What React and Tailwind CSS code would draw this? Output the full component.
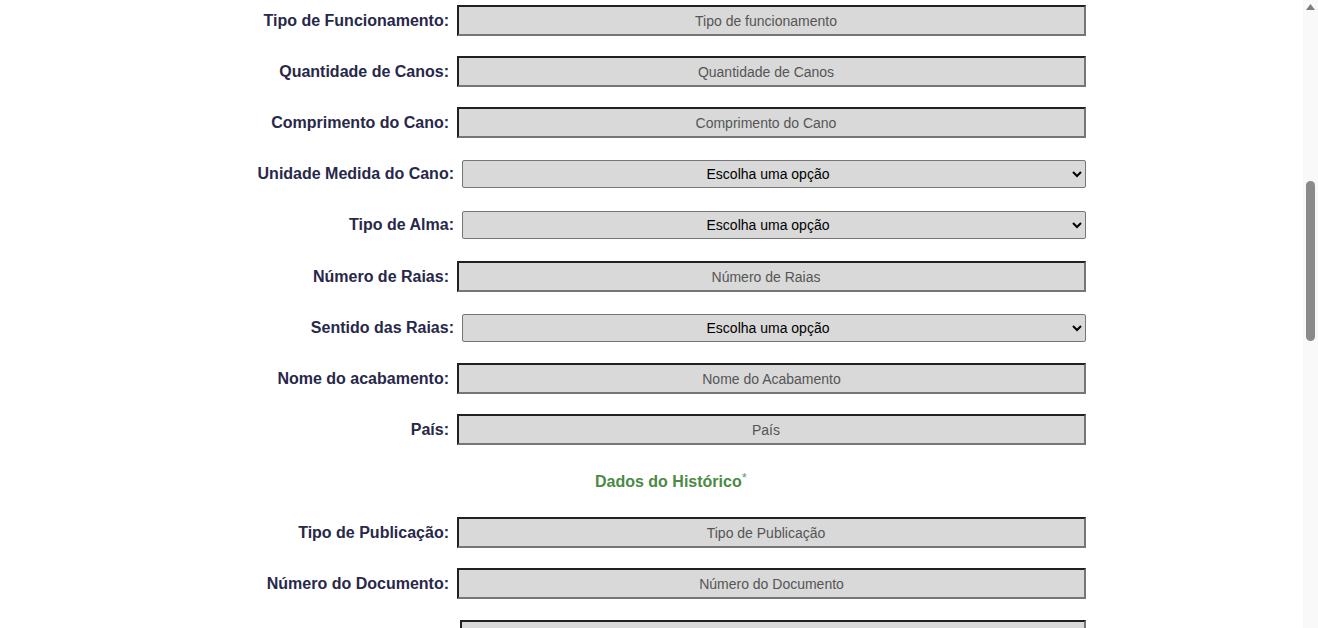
import React from "react";

const rows = [
  { label: "Tipo de Funcionamento:", type: "input", ph: "Tipo de funcionamento", mt: "mt-[5px]" },
  { label: "Quantidade de Canos:", type: "input", ph: "Quantidade de Canos", mt: "mt-[20px]" },
  { label: "Comprimento do Cano:", type: "input", ph: "Comprimento do Cano", mt: "mt-[20px]" },
  { label: "Unidade Medida do Cano:", type: "select", mt: "mt-[22px]" },
  { label: "Tipo de Alma:", type: "select", mt: "mt-[23px]" },
  { label: "Número de Raias:", type: "input", ph: "Número de Raias", mt: "mt-[22px]" },
  { label: "Sentido das Raias:", type: "select", mt: "mt-[22px]" },
  { label: "Nome do acabamento:", type: "input", ph: "Nome do Acabamento", mt: "mt-[21px]", shift: false },
  { label: "País:", type: "input", ph: "País", mt: "mt-[20px]" },
  { type: "heading", mt: "mt-[28px]" },
  { label: "Tipo de Publicação:", type: "input", ph: "Tipo de Publicação", mt: "mt-[26px]" },
  { label: "Número do Documento:", type: "input", ph: "Número do Documento", mt: "mt-[20px]", shift: false },
  { label: "", type: "last", mt: "mt-[21px]" },
];

function Row({ r }) {
  if (r.type === "heading") {
    return (
      <div className={`${r.mt} h-[18px] leading-[18px] flex items-center pl-[595px]`}>
        <span className="text-[16px] font-bold text-[#4b8a44]">
          Dados do Histórico
          <span className="text-[13px] font-normal align-top relative top-[-4px] text-[#5f9a7e]">*</span>
        </span>
      </div>
    );
  }
  const h = r.type === "select" ? "h-[28px]" : "h-[31px]";
  return (
    <div className={`${r.mt} ${h} flex items-center justify-end pr-[217px]`}>
      {r.label && (
        <label className="text-[16px] font-bold text-[#28284a] mr-2 whitespace-nowrap">{r.label}</label>
      )}
      {r.type === "input" && (
        <input
          placeholder={r.ph}
          className={`w-[629px] h-[31px] bg-[#d9d9d9] border-2 [border-style:inset] border-[#767676] text-center text-[14px] placeholder:text-[#555555] outline-none ${
            r.shift === false ? "pr-0" : "pr-[11px]"
          }`}
          style={{ fontFamily: '"Liberation Sans", Arial, sans-serif' }}
        />
      )}
      {r.type === "select" && (
        <select
          className="w-[624px] h-[28px] bg-[#d9d9d9] border border-[#767676] rounded-[2px] text-[14px] text-black [text-align-last:center] outline-none"
          style={{ fontFamily: '"Liberation Sans", Arial, sans-serif' }}
          defaultValue=""
        >
          <option value="">Escolha uma opção</option>
        </select>
      )}
      {r.type === "last" && (
        <div className="w-[626px] h-[31px] bg-[#d9d9d9] border-2 [border-style:inset] border-[#767676]" />
      )}
    </div>
  );
}

export default function App() {
  return (
    <div
      className="w-[1318px] h-[628px] overflow-hidden flex bg-white"
      style={{ fontFamily: '"Liberation Sans", Arial, sans-serif' }}
    >
      <div className="flex-1 overflow-hidden">
        <div className="flex flex-col">
          {rows.map((r, i) => (
            <Row key={i} r={r} />
          ))}
        </div>
      </div>
      <div className="w-[15px] h-full bg-[#f9f9f9] relative flex flex-col items-center">
        <svg width="9" height="6" viewBox="0 0 9 6" className="mt-[4px]">
          <polygon points="4.5,0 9,6 0,6" fill="#7d7d7d" />
        </svg>
        <div className="mt-[171px] w-[9px] h-[160px] rounded-full bg-[#8a8a8a]" />
      </div>
    </div>
  );
}
